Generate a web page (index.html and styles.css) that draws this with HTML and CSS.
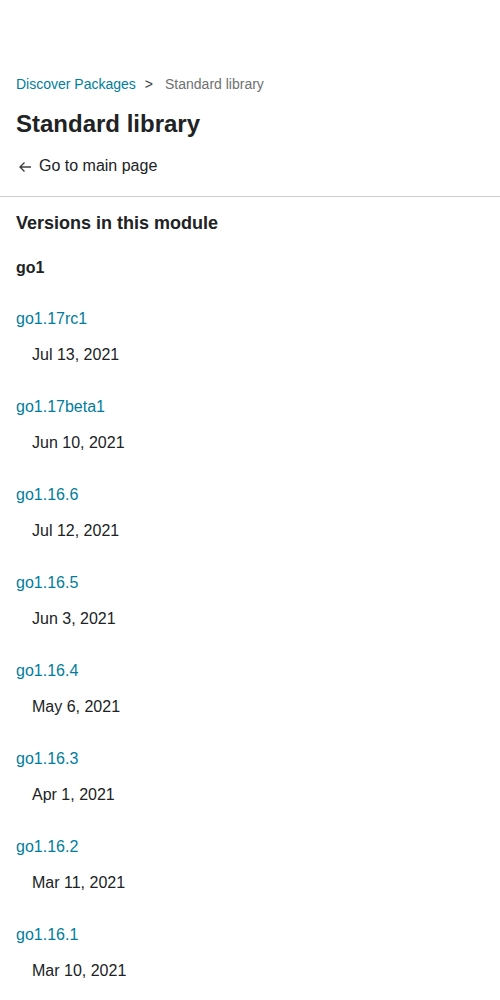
FILE: index.html
```html
<!DOCTYPE html>
<html>
<head>
<meta charset="utf-8">
<link rel="stylesheet" href="styles.css">
</head>
<body>
<div class="header">
  <nav class="crumbs"><a href="#" class="link">Discover Packages</a><span class="sep">&gt;</span><span class="current">Standard library</span></nav>
  <h1 class="title">Standard library</h1>
  <a href="#" class="back"><svg class="arrow" width="14" height="12" viewBox="0 0 14 12"><path d="M13 6H2M6.5 1.5L2 6l4.5 4.5" fill="none" stroke="#3e4042" stroke-width="1.4"/></svg><span>Go to main page</span></a>
</div>
<div class="divider"></div>
<div class="content">
  <h2 class="section">Versions in this module</h2>
  <h3 class="major">go1</h3>
  <ul class="versions">
    <li class="item"><a href="#" class="link">go1.17rc1</a><span class="date">Jul 13, 2021</span></li>
    <li class="item"><a href="#" class="link">go1.17beta1</a><span class="date">Jun 10, 2021</span></li>
    <li class="item"><a href="#" class="link">go1.16.6</a><span class="date">Jul 12, 2021</span></li>
    <li class="item"><a href="#" class="link">go1.16.5</a><span class="date">Jun 3, 2021</span></li>
    <li class="item"><a href="#" class="link">go1.16.4</a><span class="date">May 6, 2021</span></li>
    <li class="item"><a href="#" class="link">go1.16.3</a><span class="date">Apr 1, 2021</span></li>
    <li class="item"><a href="#" class="link">go1.16.2</a><span class="date">Mar 11, 2021</span></li>
    <li class="item"><a href="#" class="link">go1.16.1</a><span class="date">Mar 10, 2021</span></li>
  </ul>
</div>
</body>
</html>
```
FILE: styles.css
```css
html, body {
  margin: 0;
  padding: 0;
  background: #fff;
  color: #202224;
  font-family: "Liberation Sans", Arial, sans-serif;
}
.header {
  padding: 74px 16px 0;
}
.crumbs {
  font-size: 14px;
  line-height: 20px;
  display: flex;
  align-items: center;
}
.link {
  color: #007d9c;
  text-decoration: none;
}
.sep {
  color: #3e4042;
  margin: 0 12px 0 9px;
}
.current {
  color: #6e7072;
}
.title {
  font-size: 24px;
  line-height: 32px;
  font-weight: bold;
  margin: 14px 0 0;
}
.back {
  display: flex;
  align-items: center;
  gap: 7px;
  margin-top: 14px;
  font-size: 16px;
  line-height: 24px;
  color: #202224;
  text-decoration: none;
}
.arrow {
  margin-left: 2px;
  margin-top: 2px;
}
.divider {
  margin-top: 18px;
  border-top: 1px solid #ccc;
}
.content {
  padding: 14px 16px 0;
}
.section {
  font-size: 18px;
  line-height: 24px;
  font-weight: bold;
  margin: 0;
}
.major {
  font-size: 16px;
  line-height: 24px;
  font-weight: bold;
  margin: 21px 0 0;
}
.versions {
  list-style: none;
  margin: 27px 0 0;
  padding: 0;
  display: flex;
  flex-direction: column;
  gap: 28px;
}
.item {
  display: flex;
  flex-direction: column;
  align-items: flex-start;
  gap: 12px;
  font-size: 16px;
  line-height: 24px;
}
.date {
  padding-left: 16px;
}
```
